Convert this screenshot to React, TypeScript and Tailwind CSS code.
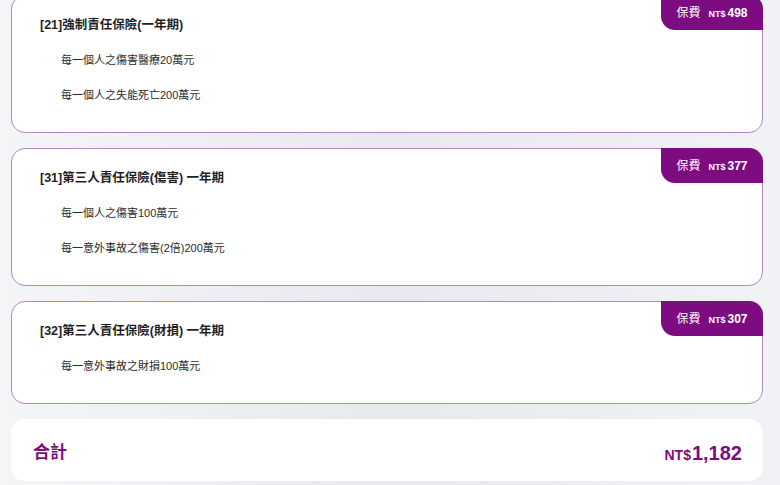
import React from "react";

type Plan = {
  title: string;
  fee: string;
  items: string[];
};

const plans: Plan[] = [
  {
    title: "[21]強制責任保險(一年期)",
    fee: "498",
    items: ["每一個人之傷害醫療20萬元", "每一個人之失能死亡200萬元"],
  },
  {
    title: "[31]第三人責任保險(傷害) 一年期",
    fee: "377",
    items: ["每一個人之傷害100萬元", "每一意外事故之傷害(2倍)200萬元"],
  },
  {
    title: "[32]第三人責任保險(財損) 一年期",
    fee: "307",
    items: ["每一意外事故之財損100萬元"],
  },
];

const font = {
  fontFamily: '"Liberation Sans", "Noto Sans CJK TC", sans-serif',
};

const PlanCard: React.FC<{ plan: Plan }> = ({ plan }) => {
  return (
    <div className="relative rounded-[14px] border border-[#b08ab8] bg-white pb-[28px] pl-[28px] pt-[20px]">
      <div className="absolute -right-px -top-px flex h-[35px] w-[102px] items-center justify-center gap-[8px] rounded-bl-[14px] rounded-tr-[14px] bg-[#7d0c80] text-white">
        <span className="text-[12px]">保費</span>
        <span className="flex items-baseline gap-[2px] font-bold">
          <span className="text-[9px]">NT$</span>
          <span className="text-[12px]">{plan.fee}</span>
        </span>
      </div>
      <h3 className="h-[18px] text-[12.5px] font-bold leading-[18px] text-[#1f1f1f]">
        {plan.title}
      </h3>
      <ul className="pl-[21px]">
        {plan.items.map((item, idx) => (
          <li
            key={idx}
            className="mt-[17px] h-[18px] text-[11px] leading-[18px] text-[#2b2b2b]"
          >
            {item}
          </li>
        ))}
      </ul>
    </div>
  );
};

export default function App() {
  return (
    <div
      className="h-[485px] w-[780px] overflow-hidden bg-gradient-to-r from-[#f4f5f7] via-[#e7e9ed] to-[#f1f2f5]"
      style={font}
    >
      <div className="-mt-[5px] flex flex-col gap-[15px] pl-[11px] pr-[17px]">
        {plans.map((plan, idx) => (
          <PlanCard key={idx} plan={plan} />
        ))}
        <div className="flex h-[62px] items-center justify-between rounded-[14px] bg-white pl-[22px] pr-[21px] pt-[5px] text-[#7d0c80]">
          <span className="text-[17px] font-bold">合計</span>
          <span className="flex items-baseline gap-[1px] font-bold">
            <span className="text-[14px]">NT$</span>
            <span className="text-[20px]">1,182</span>
          </span>
        </div>
      </div>
    </div>
  );
}
